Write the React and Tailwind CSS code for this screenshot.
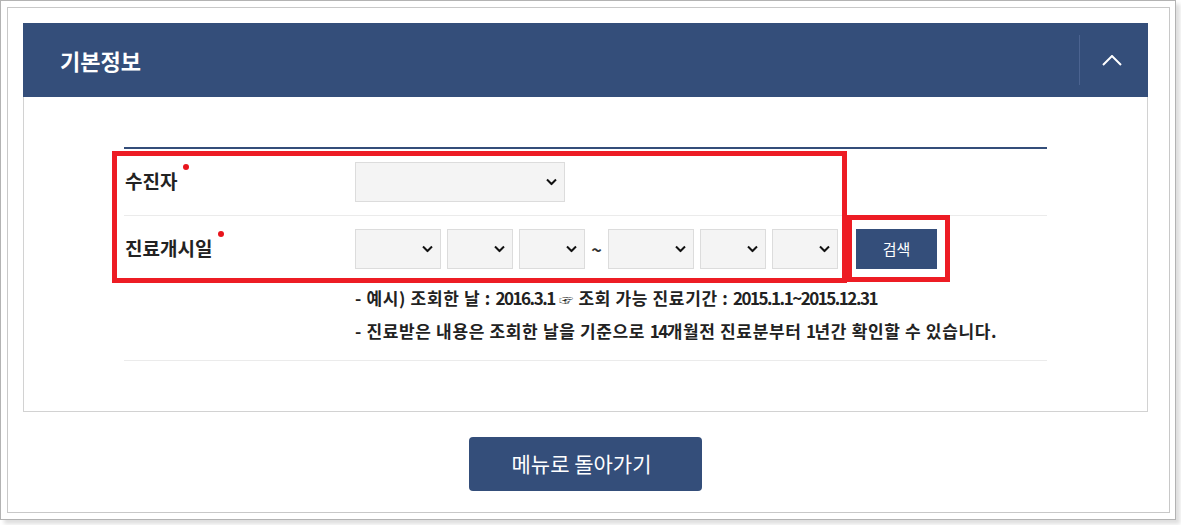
const FONT = { fontFamily: '"Noto Sans CJK KR", "Noto Sans", sans-serif' };

function Chevron() {
  return (
    <svg width="11" height="7" viewBox="0 0 11 7" fill="none">
      <path d="M1 1 L5.5 5.5 L10 1" stroke="#111" strokeWidth="2" />
    </svg>
  );
}

function Select({ width }) {
  return (
    <div className={`relative h-[40px] ${width} bg-[#f4f4f4] border border-[#dcdcdc]`}>
      <div className="absolute right-[7px] top-1/2 -translate-y-1/2 flex">
        <Chevron />
      </div>
    </div>
  );
}

function Label({ children }) {
  return (
    <div className="w-[231px] pl-px">
      <span className="relative text-[19px] leading-none font-bold text-[#222]">
        {children}
        <span className="absolute left-full ml-[6px] -top-[3px] w-[6px] h-[6px] rounded-full bg-[#e8141c]"></span>
      </span>
    </div>
  );
}

// digits in the notes are set tighter than the hangul
function Num({ children }) {
  return <span className="tracking-[-1.5px]">{children}</span>;
}

export default function App() {
  return (
    <div className="w-[1181px] h-[525px] bg-white" style={FONT}>
      <div className="w-[1176px] h-[520px] border border-[#b3b3b3] shadow-[4px_4px_4px_rgba(0,0,0,0.13)] pt-[6px] pl-[6px]">
        <div className="w-[1163px] h-[506px] border border-[#c8c8c8] pt-[15px] pl-[15px]">
          <div className="w-[1125px]">
            {/* header */}
            <div className="h-[74px] bg-[#344e7a] flex items-center justify-between">
              <h2 className="pl-[37px] text-[22px] font-bold text-white">기본정보</h2>
              <div className="h-[50px] w-[69px] border-l border-[#4b6390] flex items-center justify-center pr-[4px]">
                <svg width="20" height="11" viewBox="0 0 20 11" fill="none">
                  <path d="M1 10 L10 1 L19 10" stroke="#fff" strokeWidth="2" />
                </svg>
              </div>
            </div>

            {/* body */}
            <div className="border-x border-b border-[#d2d2d2] pt-[50px] pb-[50px]">
              <div className="relative w-[923px] mx-auto">
                <div className="h-[2px] bg-[#344e7a]"></div>

                <div className="flex items-center h-[67px] border-b border-[#ebebeb]">
                  <Label>수진자</Label>
                  <Select width="w-[210px]" />
                </div>

                <div className="pt-[13px] pb-[13px] border-b border-[#ebebeb]">
                  <div className="flex items-center">
                    <Label>진료개시일</Label>
                    <div className="flex items-center gap-[6px]">
                      <Select width="w-[86px]" />
                      <Select width="w-[66px]" />
                      <Select width="w-[66px]" />
                    </div>
                    <span className="w-[23px] text-center text-[18px] font-bold text-[#333]">~</span>
                    <div className="flex items-center gap-[6px]">
                      <Select width="w-[86px]" />
                      <Select width="w-[66px]" />
                      <Select width="w-[66px]" />
                    </div>
                    <button className="ml-[18px] w-[81px] h-[40px] bg-[#344e7a] text-white text-[15px]">검색</button>
                  </div>
                  <div className="ml-[231px] mt-[13px] text-[17px] leading-[32px] font-bold text-[#222] tracking-[0.65px]">
                    <p>- 예시) 조회한 날 : <Num>2016.3.1</Num> <span className="text-[14px] font-normal">☞</span> 조회 가능 진료기간 : <Num>2015.1.1~2015.12.31</Num></p>
                    <p>- 진료받은 내용은 조회한 날을 기준으로 <Num>14</Num>개월전 진료분부터 <Num>1</Num>년간 확인할 수 있습니다.</p>
                  </div>
                </div>

                {/* annotation boxes */}
                <div className="absolute -left-[12px] top-[4px] w-[735px] h-[132px] border-[5px] border-[#ed1c24]"></div>
                <div className="absolute left-[723px] top-[68px] w-[103px] h-[67px] border-[5px] border-[#ed1c24]"></div>
              </div>
            </div>
          </div>

          <div className="w-[1125px] flex justify-center mt-[25px]">
            <button className="w-[233px] h-[54px] rounded-[4px] bg-[#344e7a] text-white text-[21px] pr-[8px]">메뉴로 돌아가기</button>
          </div>
        </div>
      </div>
    </div>
  );
}
